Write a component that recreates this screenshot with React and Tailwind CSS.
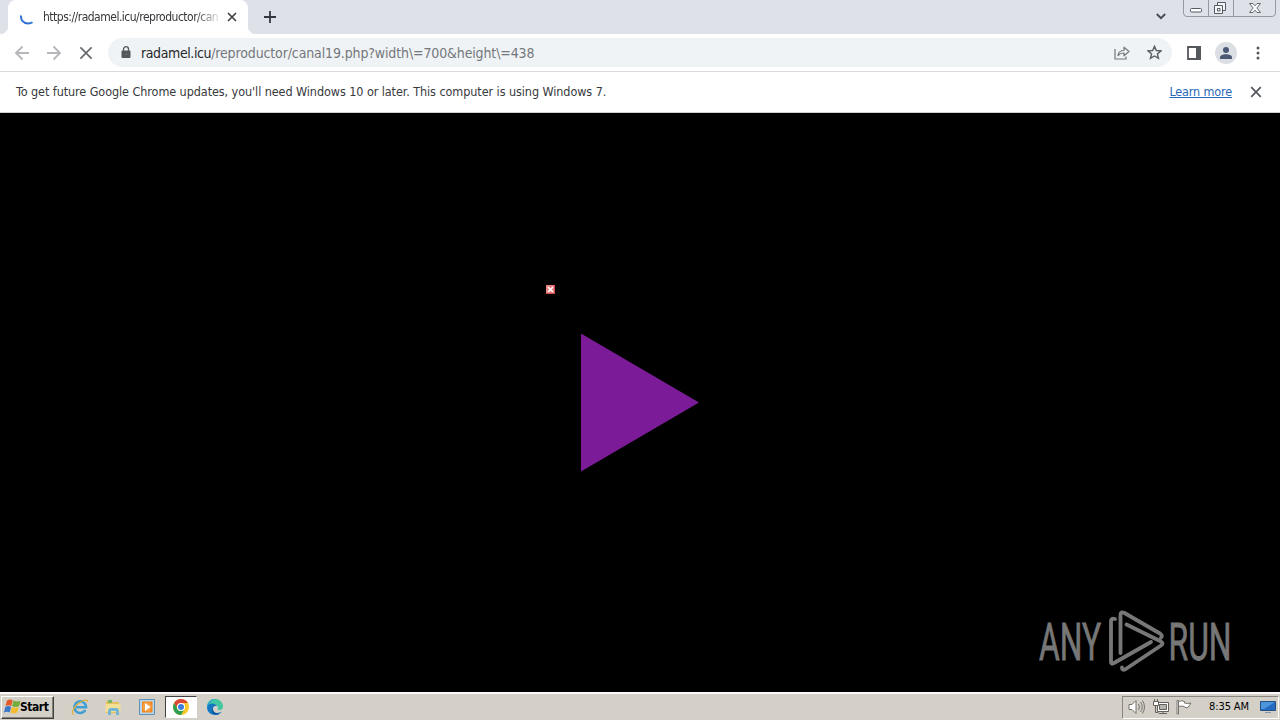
import clsx from 'clsx';

const CloseIcon = ({ size = 10, className }) => (
  <svg width={size} height={size} viewBox="0 0 10 10" fill="none" stroke="currentColor" strokeWidth={17 / size} className={className}>
    <path d="M1 1l8 8M9 1L1 9" />
  </svg>
);

const ArrowIcon = ({ flip }) => (
  <svg width="16" height="16" viewBox="0 0 16 16" fill="none" stroke="#b4b6b9" strokeWidth="1.8" className={clsx(flip && 'rotate-180')}>
    <path d="M15 8H2M8.5 1.5L2 8l6.500 6.500" />
  </svg>
);

const WindowControls = () => (
  <svg width="97" height="17" viewBox="0 0 97 17" fill="none" className="shrink-0">
    <path d="M.5 0v13q0 3.500 3.500 3.500h85q3.500 0 3.500-3.500V0M25.500 0v16M50.500 0v16" stroke="#9499a2" />
    <rect x="7.500" y="8.500" width="11" height="3.500" rx="1" fill="#fff" stroke="#555b66" />
    <path d="M34.500 2.500h8v8h-8z" fill="#f4f5f7" stroke="#555b66" />
    <path d="M31.500 5.500h8v8h-8z" fill="#f4f5f7" stroke="#555b66" />
    <path d="M34.500 8.500h2.500v2.500h-2.500z" stroke="#555b66" />
    <path d="M66.500 3.500h3.500l2 2.300 2-2.300h3.500l-3.700 4.500 3.700 4.500H74l-2-2.300-2 2.300h-3.500l3.700-4.500z" fill="#fff" stroke="#666b75" />
  </svg>
);

const TabStrip = () => (
  <div className="flex h-[34px] items-start bg-[#dee1e8]">
    <div className="relative ml-2 flex h-[34px] w-60 items-center rounded-t-lg bg-white pl-3">
      {/* Curved feet of the active tab */}
      <div className="absolute bottom-0 -left-2 size-2 bg-[radial-gradient(circle_at_0_0,#dee1e8_8px,#fff_8.5px)]" />
      <div className="absolute -right-2 bottom-0 size-2 bg-[radial-gradient(circle_at_100%_0,#dee1e8_8px,#fff_8.5px)]" />
      <svg width="16" height="16" viewBox="0 0 16 16" fill="none" stroke="#2a70d3" strokeWidth="1.900">
        <path d="M1 6.500a7 7 0 0 0 7 8q2.500 0 4.500-1.300" />
      </svg>
      <div className="ml-[7px] w-[175px] whitespace-nowrap text-[12px] leading-4 tracking-[-0.500px] text-[#35373a] [mask-image:linear-gradient(90deg,#000_152px,transparent_180px)]">
        https://radamel.icu/reproductor/can
      </div>
      <CloseIcon className="ml-[9px] text-[#3f4247]" />
    </div>
    <svg width="12" height="12" viewBox="0 0 12 12" stroke="#35383e" strokeWidth="1.8" className="mt-[11px] ml-4">
      <path d="M6 0v12M0 6h12" />
    </svg>
    <svg width="10" height="7" viewBox="0 0 10 7" fill="none" stroke="#44484f" strokeWidth="1.800" className="mt-[13px] mr-[17px] ml-auto">
      <path d="M.8 1L5 5.200 9.200 1" />
    </svg>
    <WindowControls />
  </div>
);

const AddressBar = () => (
  <div className="flex h-9 w-[1064px] items-center">
    <div className="flex h-[29px] w-full items-center rounded-full bg-[#f0f3f5] pl-[13px]">
      <svg width="10" height="13" viewBox="0 0 10 13" fill="none">
        <rect x=".5" y="4.500" width="9" height="7.500" rx="1" fill="#55585d" />
        <path d="M2.500 5V3.200a2.500 2.500 0 0 1 5 0V5" stroke="#55585d" strokeWidth="1.300" />
        <circle cx="5" cy="8.300" r=".8" fill="#77797d" />
      </svg>
      <div className="ml-2.5 pt-px whitespace-nowrap text-[14px] tracking-[-0.180px] text-[#74787c]">
        <span className="tracking-[-0.400px] text-[#26282b]">radamel.icu</span>
        <span className="tracking-[-0.130px]">/reproductor/canal19.php?width\=700&amp;height\=438</span>
      </div>
      <svg width="16" height="16" viewBox="0 0 16 16" fill="none" stroke="#74777b" strokeWidth="1.200" className="mr-[17px] ml-auto">
        <path d="M1 4v10h11v-2.500" />
        <path d="M4 10.500c.5-3.500 2.500-5 6-5V2.200l5 4.300-5 4.300V8c-3 0-4.500.7-6 2.500z" strokeLinejoin="round" />
      </svg>
      <svg width="15" height="15" viewBox="0 0 15 15" fill="none" stroke="#5a5d62" strokeWidth="1.400" className="mr-[10px]">
        <path d="M7.500 1.300l1.800 4.200 4.600.4-3.500 3 1.100 4.500-4-2.400-4 2.400 1.100-4.500-3.500-3 4.600-.4z" />
      </svg>
    </div>
  </div>
);

const Toolbar = () => (
  <div className="flex h-[38px] items-center border-b border-[#d8dadd] bg-white pl-3.5">
    <ArrowIcon />
    <div className="ml-4"><ArrowIcon flip /></div>
    <CloseIcon size={14} className="mr-[15px] ml-[17px] text-[#66696d]" />
    <AddressBar />
    <svg width="14" height="14" viewBox="0 0 14 14" className="ml-[15px]">
      <path d="M1 1h12v12H1z" fill="none" stroke="#55585d" strokeWidth="1.800" />
      <path d="M9 0h5v14H9z" fill="#55585d" />
    </svg>
    <svg width="22" height="22" viewBox="0 0 22 22" className="ml-3.5">
      <circle cx="11" cy="11" r="11" fill="#dbdee3" />
      <circle cx="11" cy="8" r="3" fill="#4c5974" />
      <path d="M5 17v-1.500c0-2 3-3.200 6-3.200s6 1.200 6 3.200V17z" fill="#4c5974" />
    </svg>
    <svg width="4" height="14" viewBox="0 0 4 14" fill="#55585d" className="ml-[19px]">
      <circle cx="2" cy="2" r="1.500" />
      <circle cx="2" cy="7" r="1.500" />
      <circle cx="2" cy="12" r="1.500" />
    </svg>
  </div>
);

const UpdateBar = () => (
  <div className="flex h-[41px] items-center border-b border-[#cfd2d2] bg-white pl-4 text-[12.500px] text-[#37393c]">
    <span className="whitespace-nowrap tracking-[-0.070px]">
      To get future Google Chrome updates, you'll need Windows 10 or later. This computer is using Windows 7.
    </span>
    <a className="ml-auto whitespace-nowrap tracking-[-0.150px] text-[#2b68b8] underline underline-offset-1">Learn more</a>
    <CloseIcon size={12} className="mr-[18px] ml-[18px] text-[#55585c]" />
  </div>
);

const Watermark = () => (
  <svg width="194" height="64" viewBox="0 0 194 64" className="absolute right-[47px] bottom-[18px]">
    <g fill="#777" stroke="#777" strokeWidth=".8" fontFamily="Roboto, sans-serif" fontSize="52">
      <text transform="translate(0 49.500)" textLength="62" lengthAdjust="spacingAndGlyphs">ANY</text>
      <text transform="translate(129.500 49.500)" textLength="63" lengthAdjust="spacingAndGlyphs">RUN</text>
    </g>
    <g fill="none" stroke="#777" strokeWidth="3.800" strokeLinecap="round" strokeLinejoin="round">
      <path d="M76 9q-4-1-4 2v41q0 3 3 1l37-21" />
      <path d="M81.500 43V5q0-4 4-2l35.500 20.500q3 2 1 4M87.500 14.500l34.500 17q3 2 0 4L86 59.500q-3 1-3-2" />
    </g>
  </svg>
);

const Viewport = () => (
  <div className="relative h-[579px] bg-black">
    <svg width="9" height="9" viewBox="0 0 9 9" className="absolute top-[172px] left-[546px]">
      <path d="M0 0h9v9H0z" fill="#e88080" />
      <path d="M0 8.500h9M8.500 0v9" stroke="#d94848" />
      <path d="M2 2l5 5M7 2L2 7" stroke="#fff" strokeWidth="1.500" />
    </svg>
    <svg width="118" height="139" viewBox="0 0 118 139" className="absolute top-[220px] left-[581px]">
      <path d="M0 .5l118 69L0 138.500z" fill="#7b1b98" />
    </svg>
    <Watermark />
  </div>
);

const WindowsFlag = () => (
  <svg width="17" height="16" viewBox="0 0 17 16">
    <path d="M3 1.500q3-2 5.700-.2L7.300 7Q4.500 5.300 1.500 7z" fill="#e4582b" />
    <path d="M9.500 1.600q3.300 1.800 7 .2L15 7.200q-3.500 1.600-6.900-.1z" fill="#72ac3b" />
    <path d="M1.300 7.900q3-1.600 5.800 0L5.700 13.500Q3 12 0 13.500z" fill="#3a78c9" />
    <path d="M7.900 8.100q3.400 1.600 6.900 0l-1.500 5.500q-3.500 1.600-6.800-.1z" fill="#f5bd2c" />
  </svg>
);

const ExplorerIcon = () => (
  <svg width="18" height="18" viewBox="0 0 18 18" fill="none">
    <path d="M14.300 12A5.800 5.800 0 1 1 15 9.300H5" stroke="#419fd4" strokeWidth="2.600" />
    <path d="M5 7.500a4.500 4.500 0 0 1 8-.5" stroke="#8ccdef" />
    <path d="M3 16.300C-1 16 3 8.500 8 5s9-4 8.500-1" stroke="#dfae36" strokeWidth="1.200" />
  </svg>
);

const FolderIcon = () => (
  <svg width="18" height="18" viewBox="0 0 18 18">
    <path d="M2 3h5l1 1h7v11H2z" fill="#e6c25f" />
    <path d="M4 2h4v3H4z" fill="#79b566" />
    <path d="M1.500 6h15v8h-15z" fill="#f4df96" />
    <path d="M4 17v-4q0-3 3-3h5q3 0 3 3v4h-3v-4H7v4z" fill="#72b5d4" />
  </svg>
);

const MediaIcon = () => (
  <svg width="16" height="16" viewBox="0 0 16 16">
    <path d="M.5.5h15v15H.5z" fill="#b9d6ea" stroke="#5d91b9" />
    <path d="M3 2.500h10.500v11H3z" fill="#f28a20" />
    <circle cx="8" cy="8" r="4.500" fill="#f6a04a" />
    <path d="M6 4l5.500 4L6 12z" fill="#fff" />
  </svg>
);

const ChromeIcon = () => (
  <svg width="16" height="16" viewBox="0 0 16 16">
    <circle cx="8" cy="8" r="8" fill="#f7c92c" />
    <path d="M1.100 4A8 8 0 0 1 14.900 4H8a4 4 0 0 0-3.500 6z" fill="#dc4638" />
    <path d="M1.100 4A8 8 0 0 0 8 16l3.500-6a4 4 0 0 1-7 0z" fill="#2e9e50" />
    <circle cx="8" cy="8" r="4" fill="#fff" />
    <circle cx="8" cy="8" r="3" fill="#3c7de0" />
  </svg>
);

const EdgeIcon = () => (
  <svg width="16" height="16" viewBox="0 0 16 16">
    <path d="M0 8a8 8 0 0 1 16-.5c0 3-2.500 4-5.500 3.500C12 8 10 5 6 5 3 5 1 6.500 0 8z" fill="#42c7a0" />
    <path d="M0 8a8 8 0 0 1 9-7.900C5 1 3 3 2 6z" fill="#2ba8d2" />
    <path d="M0 8c2-5 9-4 10-.5C8 6 5 8 6 11.500c.7 2.500 4.500 3.500 9 1C11 18 0 17 0 8z" fill="#1478c0" />
    <path d="M6.500 8.500C5 11 7 15.500 13 14.500 9 18 2 14 6.500 8.500z" fill="#0b529c" />
  </svg>
);

const Tray = () => (
  <div className="mr-px ml-auto flex h-[23px] w-[157px] items-center border border-t-[#8a8782] border-r-white border-b-white border-l-[#8a8782] pl-[5px]">
    <svg width="17" height="16" viewBox="0 0 17 16" fill="none" stroke="#76736e">
      <path d="M1 5.500h3l4-4v13l-4-4H1z" fill="#fff" />
      <path d="M10.500 5q2 3 0 6M12.500 3q3.500 5 0 10M14.500 1.500q4 6.500 0 13" />
    </svg>
    <svg width="16" height="16" viewBox="0 0 16 16" fill="none" stroke="#65625e" className="ml-[8px]">
      <path d="M4.500 3.500h11v9h-11z" fill="#fff" />
      <path d="M6.500 5.500h7v5h-7z" fill="#b5b4b1" />
      <path d="M10 12.500v2M6 14.500h8M2.500 7v6.500h3" />
      <path d="M.5 2.500h5v4h-5zM1.500 0v2M4.500 0v2" fill="#fff" />
    </svg>
    <svg width="16" height="16" viewBox="0 0 16 16" fill="#fff" stroke="#75716c" className="ml-[7px]">
      <path d="M2.500 2.500q3-1.500 6 0v1.500q3 1 6.500 0l-3 4.500q-2 1-4-1-2-1-5.500 0z" />
      <path d="M1 1.500h1.500v13.500H1z" />
    </svg>
    <span className="ml-[17px] whitespace-nowrap text-[11px] tracking-[-0.100px] text-black">8:35 AM</span>
    <svg width="16" height="14" viewBox="0 0 16 14" className="mr-[2px] ml-auto">
      <path d="M.5 1.500h15v9H.5z" fill="#236bc0" stroke="#234f84" />
      <path d="M1 2h14L4 9H1z" fill="#4b95dd" />
      <path d="M5 12h6v1H5z" fill="#8197aa" />
    </svg>
  </div>
);

const Taskbar = () => (
  <div className="flex h-7 items-center border-t-2 border-[#fbfaf8] bg-[#d4d0c8]">
    <button className="ml-px flex h-[23px] w-[53px] items-center border border-t-white border-r-[#404040] border-b-[#404040] border-l-white pl-0.5 shadow-[inset_-1px_-1px_0_#858078]">
      <WindowsFlag />
      <span className="-ml-px text-[12px] font-bold tracking-[-0.450px] text-black">Start</span>
    </button>
    <div className="ml-[17px]"><ExplorerIcon /></div>
    <div className="ml-[15px]"><FolderIcon /></div>
    <div className="ml-[17px]"><MediaIcon /></div>
    <div className="ml-2.5 flex h-[22px] w-8 items-center justify-center border border-t-[#404040] border-r-white border-b-white border-l-[#404040] bg-white">
      <ChromeIcon />
    </div>
    <div className="ml-2.5"><EdgeIcon /></div>
    <Tray />
  </div>
);

const App = () => (
  <div className="flex h-[720px] w-[1280px] flex-col overflow-hidden bg-black font-['DejaVu_Sans_Condensed','DejaVu_Sans',sans-serif]">
    <TabStrip />
    <Toolbar />
    <UpdateBar />
    <Viewport />
    <Taskbar />
  </div>
);

export default App;
